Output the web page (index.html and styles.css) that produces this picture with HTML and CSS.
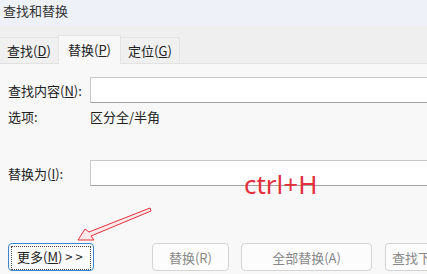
FILE: index.html
```html
<!DOCTYPE html>
<html lang="zh-CN">
<head>
    <meta charset="UTF-8">
    <title>查找和替换</title>
    <link rel="stylesheet" href="styles.css">
</head>
<body>
    <div class="dialog">
        <div class="titlebar">查找和替换</div>
        <div class="tabs">
            <div class="tab">查找(<u>D</u>)</div>
            <div class="tab active">替换(<u>P</u>)</div>
            <div class="tab">定位(<u>G</u>)</div>
        </div>
        <div class="form">
            <div class="row">
                <label class="label">查找内容(<u>N</u>):</label>
                <input class="field" type="text">
            </div>
            <div class="row">
                <span class="label">选项:</span>
                <span>区分全/半角</span>
            </div>
            <div class="row replace">
                <label class="label">替换为(<u>I</u>):</label>
                <input class="field" type="text">
            </div>
            <div class="buttons">
                <button class="btn more"><span class="focus">更多(<u>M</u>) &gt; &gt;</span></button>
                <button class="btn small">替换(R)</button>
                <button class="btn wide">全部替换(A)</button>
                <button class="btn wide last">查找下一处(F)</button>
            </div>
        </div>
        <div class="note">ctrl+H</div>
        <svg class="arrow" width="90" height="50" viewBox="70 200 90 50">
            <polygon points="78,240 85,229 89,232 150,208 151,211 91,236 94,240" fill="#fde8ea" stroke="#e3303c" stroke-width="1"/>
        </svg>
    </div>
</body>
</html>
```

FILE: styles.css
```css
body {
    margin: 0;
    padding: 0;
    background-color: #f8f8f8;
    font-family: "Noto Sans CJK SC", "Noto Sans", sans-serif;
    font-size: 13px;
    color: #222;
    overflow: hidden;
}
.dialog {
    position: relative;
    width: 427px;
    height: 274px;
    overflow: hidden;
}
.titlebar {
    height: 25px;
    line-height: 21px;
    padding-left: 3px;
    background-color: #eef2f8;
    color: #333;
}
.tabs {
    height: 38px;
    display: flex;
    align-items: flex-end;
    background-color: #efefef;
    border-bottom: 1px solid #e2e2e2;
}
.tab {
    height: 26px;
    line-height: 25px;
    box-sizing: border-box;
    white-space: nowrap;
    text-align: center;
    background-color: #f0f0f0;
    border: 1px solid #e4e4e4;
    border-bottom: none;
    margin-right: -1px;
}
.tab:first-child {
    width: 59px;
    border-left: none;
}
.tab.active {
    height: 29px;
    line-height: 27px;
    width: 63px;
    background-color: #f8f8f8;
    margin-bottom: -1px;
    position: relative;
}
.tab:last-child {
    width: 60px;
}
.form {
    padding: 13px 0 0 8px;
}
.row {
    display: flex;
    align-items: center;
    height: 26px;
}
.row.replace {
    margin-top: 31px;
}
.label {
    width: 82px;
    flex-shrink: 0;
}
.field {
    width: 400px;
    height: 26px;
    box-sizing: border-box;
    border: 1px solid #c9c9c9;
    border-bottom-color: #a3a3a3;
    background-color: #fff;
    flex-shrink: 0;
}
.buttons {
    display: flex;
    margin-top: 57px;
    height: 28px;
}
.btn {
    height: 28px;
    box-sizing: border-box;
    font-family: inherit;
    font-size: 13px;
    color: #888;
    background-color: #fcfcfc;
    border: 1px solid #d4d4d4;
    border-radius: 4px;
    padding: 0;
    flex-shrink: 0;
    white-space: nowrap;
    overflow: hidden;
}
.btn.more {
    width: 86px;
    color: #222;
    border: 1.5px solid #3a86cf;
    padding: 2px;
    margin-right: 58px;
}
.btn.more .focus {
    display: block;
    height: 100%;
    line-height: 20px;
    border: 1px dotted #444;
    text-align: left;
    padding-left: 5px;
}
.btn.small {
    width: 77px;
    margin-right: 12px;
}
.btn.wide {
    width: 131px;
    margin-right: 13px;
}
.btn.last {
    width: 42px;
    text-align: left;
    padding-left: 6px;
    border-right: none;
    border-radius: 4px 0 0 4px;
}
.note {
    position: absolute;
    left: 244px;
    top: 166px;
    font-family: "Noto Sans", sans-serif;
    font-size: 26px;
    color: #e3303c;
}
.arrow {
    position: absolute;
    left: 70px;
    top: 200px;
    width: 90px;
    height: 50px;
}
```
